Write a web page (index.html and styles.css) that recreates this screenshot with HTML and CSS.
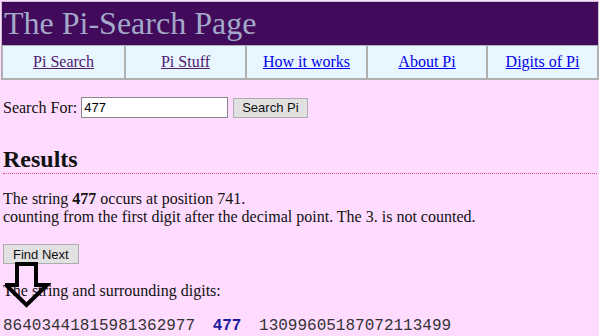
FILE: index.html
```html
<!DOCTYPE html>
<html lang="en">
<head>
    <meta charset="UTF-8">
    <title>The Pi-Search Page</title>
    <link rel="stylesheet" href="styles.css">
</head>
<body>
    <div class="header">
        <h1>The Pi-Search Page</h1>
    </div>

    <table class="nav">
        <colgroup>
            <col class="col-a">
            <col class="col-b">
            <col class="col-b">
            <col class="col-c">
            <col>
        </colgroup>
        <tr>
            <td><a class="visited" href="#">Pi Search</a></td>
            <td><a class="visited" href="#">Pi Stuff</a></td>
            <td><a href="#">How it works</a></td>
            <td><a href="#">About Pi</a></td>
            <td><a href="#">Digits of Pi</a></td>
        </tr>
    </table>

    <div class="content">
        <form class="search">
            <label for="q">Search For:</label>
            <input type="text" id="q" value="477">
            <button type="button">Search Pi</button>
        </form>

        <h2>Results</h2>

        <p class="result">The string <b>477</b> occurs at position 741.<br>
        counting from the first digit after the decimal point. The 3. is not counted.</p>

        <button type="button" class="find-next">Find Next</button>

        <div class="surround">
            <svg class="arrow" width="46" height="48" viewBox="0 0 46 48">
                <polygon points="12,3 31,3 31,24 42,24 21.5,44 1,24 12,24" fill="none" stroke="#000" stroke-width="4"/>
            </svg>
            <p>The string and surrounding digits:</p>
            <pre class="digits">86403441815981362977 <b>477</b> 13099605187072113499</pre>
        </div>
    </div>
</body>
</html>
```

FILE: styles.css
```css
body {
    margin: 0;
    padding: 1px 0 0 1px;
    background: #ffdcff;
    font-family: "Liberation Serif", "Times New Roman", serif;
    font-size: 16px;
    color: #111;
}
.header {
    background: #410a5a;
    border: 1px solid #c8c0cc;
    border-bottom: none;
    height: 43px;
}
h1 {
    margin: 0;
    padding: 2px 0 0 2px;
    font-weight: normal;
    font-size: 32px;
    line-height: 38px;
    color: #a2a9c9;
}
.nav {
    width: 100%;
    border-collapse: collapse;
    background: #e8f6ff;
    table-layout: fixed;
}
.col-a { width: 123px; }
.col-b { width: 121px; }
.col-c { width: 120px; }
.nav td {
    border: 2px solid #b0b0b0;
    border-top: 1px solid #b0b0b0;
    text-align: center;
    height: 32px;
    padding: 0;
}
.nav a {
    color: #0000ee;
}
.nav a.visited {
    color: #4e1a6e;
}
.content {
    padding: 0 2px;
}
.search {
    margin: 17px 0 0;
    display: flex;
    align-items: center;
}
.search label {
    margin-right: 4px;
}
.search input {
    width: 141px;
    height: 17px;
    padding: 1px 2px;
    border: 1px solid #888;
    font-family: "Liberation Sans", Arial, sans-serif;
    font-size: 13px;
    margin: 0;
}
button {
    font-family: "Liberation Sans", Arial, sans-serif;
    font-size: 13px;
    background: #e1e1e1;
    border: 1px solid #adadad;
    color: #111;
    height: 20px;
    padding: 0 8px;
}
.search button {
    margin-left: 5px;
}
h2 {
    margin: 27px 0 0;
    font-size: 24px;
    line-height: 28px;
    padding-bottom: 0;
    border-bottom: 1px dotted #e05070;
}
.result {
    margin: 16px 0 18px;
    line-height: 18px;
}
.find-next {
    padding: 0 9px;
}
.surround {
    position: relative;
}
.surround p {
    margin: 18px 0 0;
}
.arrow {
    position: absolute;
    left: 2px;
    top: -21px;
}
.digits {
    margin: 17px 0 0;
    font-family: "Liberation Mono", "Courier New", monospace;
    font-size: 16px;
    color: #333;
}
.digits b {
    color: #1a1aa0;
    margin: 0 8px;
}
```
